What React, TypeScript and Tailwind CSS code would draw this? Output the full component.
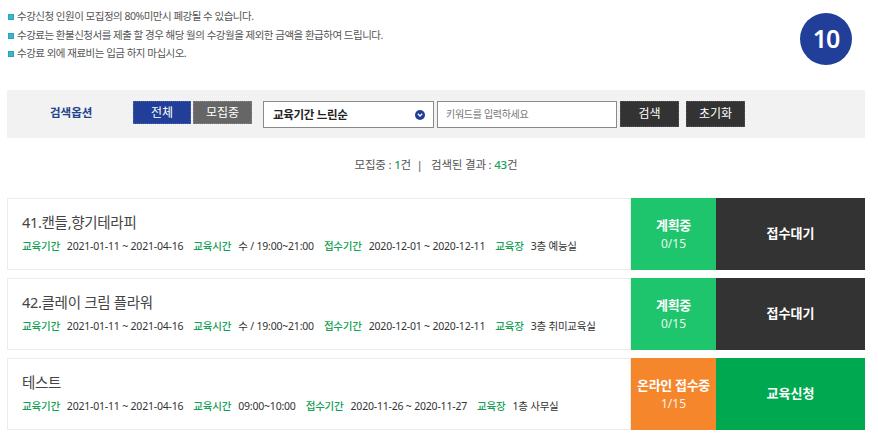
import React from "react";

const font = { fontFamily: '"Noto Sans", "Noto Sans CJK KR", sans-serif' };

type Course = {
  title: string;
  period: string;
  time: string;
  recv: string;
  place: string;
  status: string;
  count: string;
  statusColor: string;
  action: string;
  actionColor: string;
};

const courses: Course[] = [
  {
    title: "41.캔들,향기테라피",
    period: "2021-01-11 ~ 2021-04-16",
    time: "수 / 19:00~21:00",
    recv: "2020-12-01 ~ 2020-12-11",
    place: "3층 예능실",
    status: "계획중",
    count: "0/15",
    statusColor: "bg-[#1fc56c]",
    action: "접수대기",
    actionColor: "bg-[#333333]",
  },
  {
    title: "42.클레이 크림 플라워",
    period: "2021-01-11 ~ 2021-04-16",
    time: "수 / 19:00~21:00",
    recv: "2020-12-01 ~ 2020-12-11",
    place: "3층 취미교육실",
    status: "계획중",
    count: "0/15",
    statusColor: "bg-[#1fc56c]",
    action: "접수대기",
    actionColor: "bg-[#333333]",
  },
  {
    title: "테스트",
    period: "2021-01-11 ~ 2021-04-16",
    time: "09:00~10:00",
    recv: "2020-11-26 ~ 2020-11-27",
    place: "1층 사무실",
    status: "온라인 접수중",
    count: "1/15",
    statusColor: "bg-[#f5862b]",
    action: "교육신청",
    actionColor: "bg-[#00a94f]",
  },
];

function Notice({ children }: { children: React.ReactNode }) {
  return (
    <div className="flex items-center h-[18.5px]">
      <span className="w-[6px] h-[6px] bg-[#3fb4cc] border border-[#2aa3bf] mr-[3px] ml-[1px] shrink-0" />
      <span className="text-[10.5px] text-[#555] tracking-[-0.5px] whitespace-nowrap">{children}</span>
    </div>
  );
}

function Info({ label, value }: { label: string; value: string }) {
  return (
    <span className="flex items-center mr-[10px] whitespace-nowrap">
      <span className="text-[#14a056] font-medium mr-[7px]">{label}</span>
      <span className="text-[#333]">{value}</span>
    </span>
  );
}

export default function App() {
  return (
    <div className="w-[878px] h-[437px] bg-white overflow-hidden" style={font}>
      <div className="mx-[7px] w-[858px]">
        {/* top */}
        <div className="flex h-[90px] justify-between">
          <div className="pt-[8px]">
            <Notice>수강신청 인원이 모집정의 80%미만시 폐강될 수 있습니다.</Notice>
            <Notice>수강료는 환불신청서를 제출 할 경우 해당 월의 수강월을 제외한 금액을 환급하여 드립니다.</Notice>
            <Notice>수강료 외에 재료비는 입금 하지 마십시오.</Notice>
          </div>
          <div className="pt-[13px] pr-[13px]">
            <div className="w-[52px] h-[52px] rounded-full bg-[#213f98] flex items-center justify-center text-white text-[25px] font-semibold tracking-[-1px]">
              10
            </div>
          </div>
        </div>

        {/* search bar */}
        <div className="h-[48px] bg-[#f2f2f2] flex items-start pt-[11px]">
          <div className="w-[126px] pl-[43px] h-[23px] flex items-center text-[11.5px] font-bold text-[#23428f] whitespace-nowrap">
            검색옵션
          </div>
          <button className="w-[58px] h-[23px] bg-[#213f98] text-white text-[12px] border border-dotted border-[#4a64b0]">
            전체
          </button>
          <button className="ml-[2px] w-[59px] h-[23px] bg-[#666] text-white text-[12px] border border-dotted border-[#888]">
            모집중
          </button>
          <div className="ml-[11px] w-[171px] h-[27px] bg-white border border-[#8a8a8a] flex items-center justify-between pl-[9px] pr-[8px]">
            <span className="text-[11.5px] font-bold text-[#222] tracking-[-0.3px]">교육기간 느린순</span>
            <span className="w-[10px] h-[10px] rounded-full bg-[#213f98] flex items-center justify-center">
              <svg width="6" height="4" viewBox="0 0 6 4">
                <path d="M0.8 0.8 L3 3 L5.2 0.8" stroke="white" strokeWidth="1.3" fill="none" />
              </svg>
            </span>
          </div>
          <div className="ml-[3px] w-[180px] h-[27px] bg-white border border-[#8a8a8a] flex items-center pl-[8px]">
            <span className="text-[10px] text-[#777] tracking-[-0.3px]">키워드를 입력하세요</span>
          </div>
          <button className="ml-[3px] w-[59px] h-[26px] bg-[#333] text-white text-[12px] border border-dotted border-[#555]">
            검색
          </button>
          <button className="ml-[7px] w-[59px] h-[26px] bg-[#333] text-white text-[12px] border border-dotted border-[#555]">
            초기화
          </button>
        </div>

        {/* result */}
        <div className="h-[60px] pt-[18px] text-center text-[11.5px] leading-[18px] text-[#555] tracking-[-0.2px]">
          모집중 : <span className="text-[#14a056] font-medium">1</span>건 &nbsp;|&nbsp;&nbsp; 검색된 결과 : <span className="text-[#14a056] font-medium">43</span>건
        </div>

        {/* list */}
        <div className="flex flex-col gap-[8px]">
          {courses.map((c) => (
            <div key={c.title} className="flex h-[72px]">
              <div className="flex-1 border border-[#ececec] pl-[14px] pt-[12px]">
                <div className="text-[14.5px] text-[#444] leading-[22px] tracking-[-0.3px]">{c.title}</div>
                <div className="flex text-[10.5px] mt-[5px] leading-[16px] tracking-[-0.2px]">
                  <Info label="교육기간" value={c.period} />
                  <Info label="교육시간" value={c.time} />
                  <Info label="접수기간" value={c.recv} />
                  <Info label="교육장" value={c.place} />
                </div>
              </div>
              <div className={`w-[85px] ${c.statusColor} flex flex-col items-center justify-center text-white`}>
                <div className="text-[13px] font-bold leading-[18px] whitespace-nowrap tracking-[-0.3px]">{c.status}</div>
                <div className="text-[12px] leading-[18px] mt-[1px] opacity-90">{c.count}</div>
              </div>
              <div className={`w-[149px] ${c.actionColor} flex items-center justify-center text-white text-[13px] font-bold`}>
                {c.action}
              </div>
            </div>
          ))}
        </div>
      </div>
    </div>
  );
}
